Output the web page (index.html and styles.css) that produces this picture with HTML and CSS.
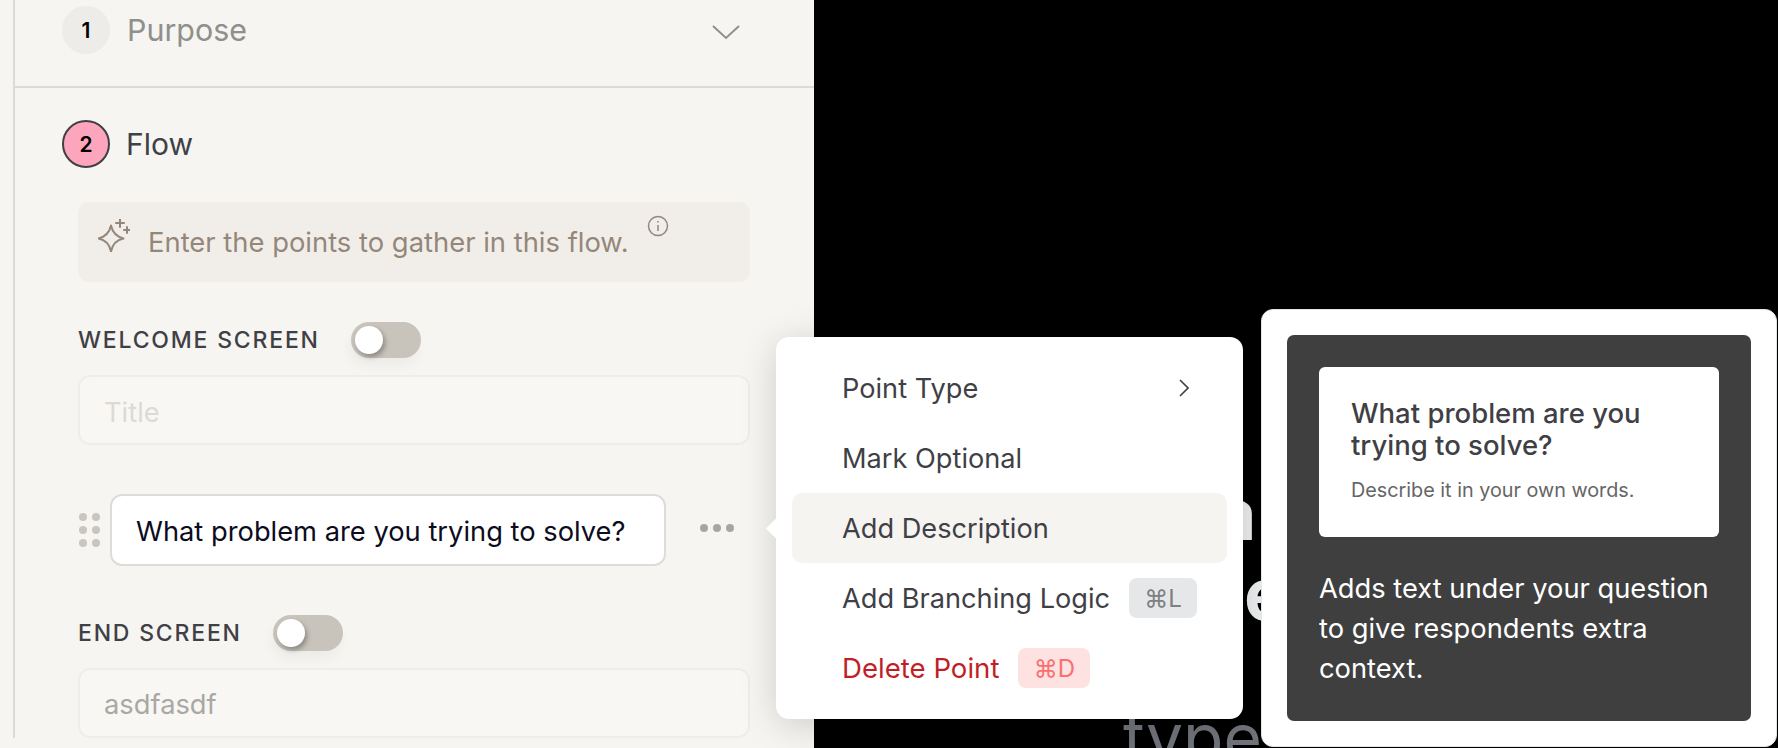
FILE: index.html
```html
<!DOCTYPE html>
<html lang="en">
<head>
    <meta charset="UTF-8">
    <meta content="width=device-width, initial-scale=1.0" name="viewport">
    <title>Flow editor</title>
    <link rel="stylesheet" href="styles.css">
</head>
<body>
<div class="page">
    <aside class="panel">
        <section class="step step-closed">
            <div class="step-head">
                <span class="step-num">1</span>
                <span class="step-name">Purpose</span>
                <svg class="step-chevron" viewBox="0 0 30 16" fill="none"><path d="M2 2l13 12L28 2" stroke="#8f8f8c" stroke-width="2"/></svg>
            </div>
        </section>
        <section class="step">
            <div class="step-head">
                <span class="step-num step-num-active">2</span>
                <span class="step-name step-name-active">Flow</span>
            </div>
            <div class="hint">
                <svg class="hint-icon" viewBox="0 0 32 33" fill="none" stroke="#94877a" stroke-width="2" stroke-linejoin="round" stroke-linecap="round">
                    <path d="M13 6.500c1.500 7 5 11 12.500 13-7.500 1.500-11 5.500-12.500 13-1.500-7.500-5-11.500-12.500-13 7.500-2 11-6 12.500-13z"/>
                    <path d="M22 0v8M18 4h8M29 8v6M26 11h6"/>
                </svg>
                <span class="hint-text">Enter the points to gather in this flow.</span>
                <svg class="hint-info" viewBox="0 0 22 22" fill="none" stroke="#94877a" stroke-width="1.500"><circle cx="11" cy="11" r="9.500"/><path d="M11 10v6M11 6v1.500"/></svg>
            </div>
            <div class="label-row">
                <span class="field-label">WELCOME SCREEN</span>
                <span class="toggle"><span class="toggle-knob"></span></span>
            </div>
            <div class="field field-muted">Title</div>
            <div class="point-row">
                <div class="drag-dots">
                    <i></i><i></i><i></i><i></i><i></i><i></i>
                </div>
                <div class="point-input">What problem are you trying to solve?</div>
                <div class="more-dots"><i></i><i></i><i></i></div>
            </div>
            <div class="label-row label-row-end">
                <span class="field-label">END SCREEN</span>
                <span class="toggle"><span class="toggle-knob"></span></span>
            </div>
            <div class="field">asdfasdf</div>
        </section>
    </aside>
    <main class="stage">
        <div class="stage-big">a</div>
        <div class="stage-big stage-big-second">e</div>
        <div class="stage-type">type</div>
    </main>

    <div class="menu">
        <span class="menu-caret"></span>
        <div class="menu-item">
            <span>Point Type</span>
            <svg class="menu-arrow" viewBox="0 0 10 18" fill="none"><path d="M1 1l8 8-8 8" stroke="#3f3f46" stroke-width="1.600"/></svg>
        </div>
        <div class="menu-item">Mark Optional</div>
        <div class="menu-item menu-item-hover">Add Description</div>
        <div class="menu-item">
            <span>Add Branching Logic</span>
            <kbd class="key">⌘L</kbd>
        </div>
        <div class="menu-item menu-item-danger">
            <span>Delete Point</span>
            <kbd class="key key-danger">⌘D</kbd>
        </div>
    </div>

    <div class="tip">
        <div class="tip-inner">
            <div class="tip-preview">
                <div class="tip-question">What problem are you trying to solve?</div>
                <div class="tip-desc">Describe it in your own words.</div>
            </div>
            <p class="tip-text">Adds text under your question to give respondents extra context.</p>
        </div>
    </div>
</div>
</body>
</html>
```

FILE: styles.css
```css
* {
    box-sizing: border-box;
}

body {
    margin: 0;
    font-family: Inter, "Liberation Sans", sans-serif;
    background: #000;
}

.page {
    position: relative;
    display: flex;
    width: 1778px;
    height: 748px;
    overflow: hidden;
}

.panel {
    width: 814px;
    flex: none;
    padding-left: 13px;
    background: #f6f5f1;
    overflow: hidden;
}

.step {
    border-left: 2px solid #dcdad5;
    padding: 32px 64px 0 47px;
}

.step-closed {
    height: 88px;
    padding-top: 6px;
    border-bottom: 2px solid #dcdad5;
}

.step-head {
    display: flex;
    align-items: center;
    height: 48px;
}

.step-num {
    width: 48px;
    height: 48px;
    border-radius: 50%;
    background: #eeece8;
    color: #000;
    font-size: 21px;
    font-weight: 600;
    display: flex;
    align-items: center;
    justify-content: center;
}

.step-num-active {
    background: #fca5bd;
    border: 2px solid #3f3f46;
}

.step-name {
    margin-left: 16px;
    font-size: 30px;
    color: #8f8f8c;
}

.step-closed .step-name {
    margin-left: 17px;
    font-size: 30.400px;
}

.step-name-active {
    color: #3f3f46;
}

.step-chevron {
    margin: 4px 9px 0 auto;
    width: 30px;
    height: 16px;
}

.hint {
    display: flex;
    margin: 34px 0 0 16px;
    height: 80px;
    width: 672px;
    padding-left: 20px;
    background: #f1eeea;
    border-radius: 11px;
}

.hint-icon {
    width: 32px;
    height: 33px;
    margin-top: 17px;
}

.hint-text {
    margin: 24px 0 0 18px;
    font-size: 27.400px;
    line-height: 32px;
    color: #94877a;
}

.hint-info {
    width: 22px;
    height: 22px;
    margin: 13px 0 0 18px;
}

.label-row {
    display: flex;
    align-items: center;
    margin: 40px 0 0 16px;
    height: 36px;
}

.label-row-end {
    margin-top: 49px;
}

.field-label {
    font-size: 23px;
    font-weight: 500;
    letter-spacing: 1.800px;
    color: #3f3f46;
}

.toggle {
    width: 70px;
    height: 36px;
    margin-left: 31px;
    padding: 4px;
    background: #c8c3bb;
    border-radius: 18px;
    box-shadow: -2px 8px 12px rgba(0, 0, 0, 0.04);
}

.toggle-knob {
    display: block;
    width: 28px;
    height: 28px;
    border-radius: 50%;
    background: #fff;
    box-shadow: 2px 3px 5px rgba(0, 0, 0, 0.3);
}

.field {
    width: 672px;
    height: 70px;
    margin: 17px 0 0 16px;
    padding: 2px 0 0 24px;
    display: flex;
    align-items: center;
    background: #f8f7f4;
    border: 2px solid #efede9;
    border-radius: 12px;
    font-size: 27.300px;
    color: #aaa8a4;
}

.field-muted {
    padding-top: 4px;
    color: #dcdad6;
}

.point-row {
    display: flex;
    align-items: center;
    margin: 49px 0 0 16px;
    height: 72px;
}

.drag-dots {
    display: grid;
    grid-template-columns: 8px 8px;
    gap: 5px;
    width: 32px;
    padding-left: 1px;
}

.drag-dots i {
    width: 8px;
    height: 8px;
    border-radius: 50%;
    background: #c9c6c1;
}

.point-input {
    width: 556px;
    height: 72px;
    padding: 2px 0 0 24px;
    display: flex;
    align-items: center;
    background: #fff;
    border: 2px solid #dedcd8;
    border-radius: 12px;
    font-size: 27.300px;
    color: #0c0c1e;
}

.more-dots {
    display: flex;
    gap: 5px;
    margin: -4px 0 0 34px;
}

.more-dots i {
    width: 8px;
    height: 8px;
    border-radius: 50%;
    background: #a8a6a2;
}

.stage {
    flex: 1;
    padding: 474px 0 0 400px;
    color: #eceeef;
    font-size: 73px;
    font-weight: 700;
    line-height: 80px;
}

.stage-big-second {
    margin-left: 30px;
}

.stage-type {
    margin: 63px 0 0 -91px;
    font-weight: 400;
    font-size: 66px;
    color: #70747a;
}

.menu {
    position: absolute;
    left: 776px;
    top: 337px;
    width: 467px;
    height: 382px;
    padding: 16px;
    background: #fff;
    border-radius: 13px;
    box-shadow: 0 6px 36px rgba(0, 0, 0, 0.16);
}

.menu-caret {
    position: absolute;
    left: -7px;
    top: 184px;
    width: 15px;
    height: 15px;
    background: #fff;
    transform: rotate(45deg);
}

.menu-item {
    display: flex;
    align-items: center;
    height: 70px;
    padding: 0 30px 0 50px;
    border-radius: 10px;
    font-size: 27.200px;
    white-space: nowrap;
    color: #3f3f46;
}

.menu-item-hover {
    background: #f5f4f1;
}

.menu-item-danger {
    font-size: 27.600px;
    color: #c11f26;
}

.menu-arrow {
    width: 10px;
    height: 18px;
    margin: 0 8px 0 auto;
}

.key {
    flex: none;
    margin-left: 19px;
    display: flex;
    align-items: center;
    justify-content: center;
    width: 68px;
    height: 40px;
    border-radius: 8px;
    background: #e5e7e8;
    color: #7e8082;
    font-family: Inter, "DejaVu Sans", sans-serif;
    font-size: 24px;
}

.key-danger {
    width: 72px;
    background: #fee2e2;
    color: #f87171;
}

.tip {
    position: absolute;
    left: 1261px;
    top: 309px;
    width: 516px;
    height: 438px;
    padding: 25px;
    background: #fff;
    border: 1px solid #e4e6e6;
    border-radius: 12px;
}

.tip-inner {
    height: 386px;
    padding: 32px;
    background: #3f3f3f;
    border-radius: 7px;
}

.tip-preview {
    height: 170px;
    padding: 30px 32px;
    background: #fff;
    border-radius: 6px;
}

.tip-question {
    font-size: 27.500px;
    font-weight: 500;
    line-height: 32px;
    color: #3f3f46;
}

.tip-desc {
    margin-top: 16px;
    font-size: 19.800px;
    line-height: 26px;
    color: #666;
}

.tip-text {
    margin: 32px 0 0;
    font-size: 27.300px;
    line-height: 40px;
    color: #fff;
}
```
